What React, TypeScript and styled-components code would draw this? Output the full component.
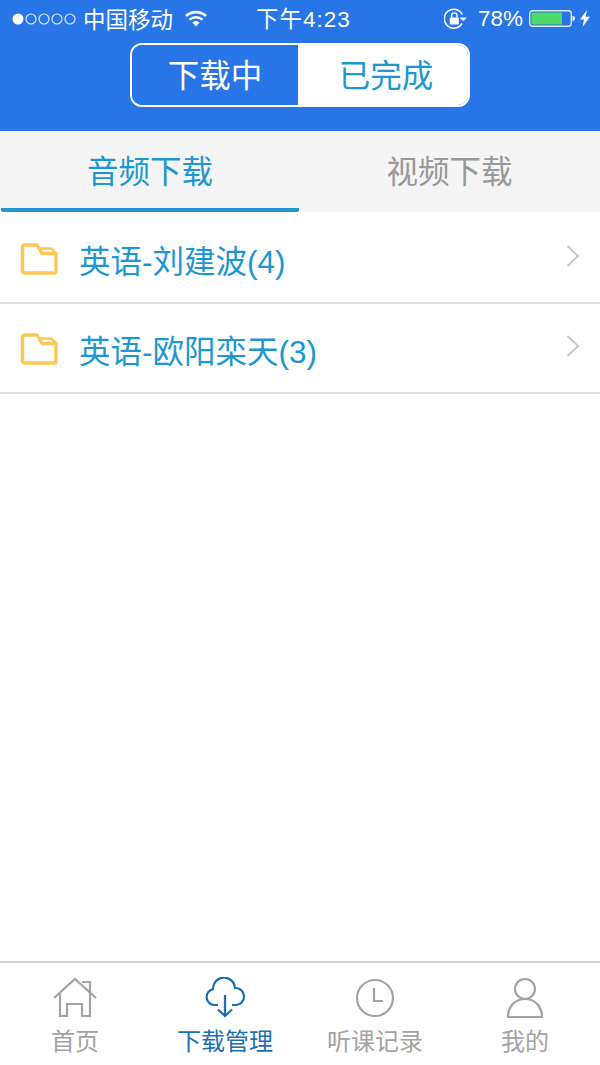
import React from "react";
import styled, { createGlobalStyle } from "styled-components";

const Global = createGlobalStyle`
  html, body { margin: 0; padding: 0; background: #fff; }
  body { font-family: "Liberation Sans", "Noto Sans CJK SC", sans-serif; }
  * { box-sizing: border-box; }
`;

const Page = styled.div`
  width: 600px;
  height: 1065px;
  display: flex;
  flex-direction: column;
  background: #fff;
  overflow: hidden;
`;

const Header = styled.header`
  height: 131px;
  background: #2775e6;
  display: flex;
  flex-direction: column;
  align-items: center;
`;

const StatusBar = styled.div`
  width: 100%;
  height: 43px;
  padding: 0 10px 6px 12px;
  display: grid;
  grid-template-columns: 1fr auto 1fr;
  align-items: center;
  color: #fff;
  font-size: 22.5px;
`;

const StatusLeft = styled.div`
  display: flex;
  align-items: center;
`;

const StatusRight = styled.div`
  display: flex;
  align-items: center;
  justify-content: flex-end;
`;

const Carrier = styled.span`
  margin-left: 7px;
  padding-bottom: 2px;
  width: 90px;
  white-space: nowrap;
`;

const Clock = styled.span`
  margin-left: 5px;
  padding-bottom: 3px;
  white-space: nowrap;
  letter-spacing: 1px;
`;

const Percent = styled.span`
  margin: 0 6px 0 11px;
`;

const Glyph = styled.svg<{ $gap?: number }>`
  display: block;
  flex: none;
  margin-left: ${(p) => p.$gap ?? 0}px;
`;

const Segmented = styled.div`
  width: 340px;
  height: 64px;
  display: flex;
  border: 2px solid #fff;
  border-radius: 12px;
  overflow: hidden;
`;

const Segment = styled.div<{ $active?: boolean }>`
  flex: ${(p) => (p.$active ? "0 0 166px" : "1")};
  display: flex;
  align-items: center;
  justify-content: center;
  font-size: 31.5px;
  padding: ${(p) => (p.$active ? "0 0 4px 0" : "0 0 4px 6px")};
  background: ${(p) => (p.$active ? "#2775e6" : "#fff")};
  color: ${(p) => (p.$active ? "#fff" : "#1c97d1")};
`;

const Tabs = styled.div`
  height: 81px;
  display: flex;
  background: #f5f5f5;
`;

const Tab = styled.div<{ $active?: boolean }>`
  flex: 0 0 ${(p) => (p.$active ? "298px" : "301px")};
  display: flex;
  align-items: center;
  justify-content: center;
  font-size: 31.5px;
  padding-bottom: 2px;
  margin-left: ${(p) => (p.$active ? "1px" : "0")};
  color: ${(p) => (p.$active ? "#1c97d1" : "#999")};
  border-bottom: 4px solid ${(p) => (p.$active ? "#1c97d1" : "transparent")};
  border-radius: 0 0 2px 2px;
`;

const List = styled.div`
  flex: 1;
  padding-top: 2px;
  background: #fff;
`;

const Row = styled.div`
  height: 90px;
  display: flex;
  align-items: center;
  padding: 2px 20px 0 20px;
  border-bottom: 2px solid #dfdfdf;
`;

const RowLabel = styled.span`
  flex: 1;
  margin-left: 21px;
  font-size: 31.5px;
  color: #1c97d1;
  white-space: nowrap;
`;

const TabBar = styled.nav`
  height: 104px;
  display: grid;
  grid-template-columns: repeat(4, 1fr);
  border-top: 2px solid #d2d2d2;
  background: #fff;
`;

const TabItem = styled.div<{ $active?: boolean }>`
  display: flex;
  flex-direction: column;
  align-items: center;
  padding-top: 14px;
  font-size: 24px;
  line-height: 32px;
  color: ${(p) => (p.$active ? "#1b6fb5" : "#a3a3a3")};
`;

const TabIcon = styled.svg`
  display: block;
  width: 48px;
  height: 44px;
  margin-bottom: 5px;
  fill: none;
  stroke: currentColor;
  stroke-width: 2.2;
`;

const Dots = () => (
  <Glyph width="64" height="14" viewBox="0 0 64 14">
    <circle cx="6" cy="7" r="5.5" fill="#fff" />
    {[19, 32, 45, 58].map((x) => (
      <circle key={x} cx={x} cy="7" r="5" fill="none" stroke="#d6e4fa" strokeWidth="1.2" />
    ))}
  </Glyph>
);

const Wifi = () => (
  <Glyph $gap={12} width="22" height="17" viewBox="0 0 22 17">
    <path d="M1 6C6.500 .8 15.500 .8 21 6" fill="none" stroke="#fff" strokeWidth="2.600" />
    <path d="M4.500 9.600c3.600-3.200 9.400-3.200 13 0" fill="none" stroke="#fff" strokeWidth="2.600" />
    <path d="M7.400 12.400c2.600-2 4.600-2 7.200 0L11 16.500z" fill="#fff" />
  </Glyph>
);

const RotationLock = () => (
  <Glyph width="23" height="22" viewBox="0 0 23 22">
    <path d="M18 15.500A9.500 9.500 0 1 1 18.300 6.500" fill="none" stroke="#fff" strokeWidth="1.500" />
    <path d="M15.500 9.500h7.500l-3.700 3.600z" fill="#fff" />
    <rect x="5.800" y="9.500" width="9" height="7" rx="1" fill="#fff" />
    <path d="M7.600 9.500V7.600a2.700 2.700 0 0 1 5.400 0v1.900" fill="none" stroke="#fff" strokeWidth="1.400" />
  </Glyph>
);

const Battery = () => (
  <Glyph width="46" height="17" viewBox="0 0 46 17">
    <rect x=".7" y=".7" width="41.600" height="15.600" rx="3" fill="none" stroke="#dfeafb" strokeWidth="1.400" />
    <rect x="2.500" y="2.500" width="30.500" height="12" rx="1" fill="#4cd964" />
    <path d="M43.500 6c1.600.3 2.500 1.200 2.500 2.500s-.9 2.200-2.500 2.500z" fill="#fff" />
  </Glyph>
);

const Bolt = () => (
  <Glyph $gap={5} width="10" height="17" viewBox="0 0 10 17">
    <path d="M7 0 0 9.500h4L2.600 17 10 6.800H5.700z" fill="#fff" />
  </Glyph>
);

const Folder = () => (
  <svg width="38" height="32" viewBox="0 0 38 32" fill="none" style={{ display: "block" }}>
    <path
      d="M2.500 4a2 2 0 0 1 2-2H17l5 8.500h14V28a2 2 0 0 1-2 2H4.500a2 2 0 0 1-2-2z"
      stroke="#fdc854"
      strokeWidth="3.400"
      strokeLinejoin="round"
    />
    <path d="M19.500 5.500H31.500L36 10.500" stroke="#fdc854" strokeWidth="2.500" />
  </svg>
);

const Chevron = () => (
  <svg width="14" height="24" viewBox="0 0 14 24" fill="none" style={{ display: "block", marginTop: -6 }}>
    <path d="M1.500 2 12 12 1.500 22" stroke="#c8c8c8" strokeWidth="2" />
  </svg>
);

const rows = ["英语-刘建波(4)", "英语-欧阳栾天(3)"];

export default function App() {
  return (
    <Page>
      <Global />
      <Header>
        <StatusBar>
          <StatusLeft>
            <Dots />
            <Carrier>中国移动</Carrier>
            <Wifi />
          </StatusLeft>
          <Clock>下午4:23</Clock>
          <StatusRight>
            <RotationLock />
            <Percent>78%</Percent>
            <Battery />
            <Bolt />
          </StatusRight>
        </StatusBar>
        <Segmented>
          <Segment $active>下载中</Segment>
          <Segment>已完成</Segment>
        </Segmented>
      </Header>
      <Tabs>
        <Tab $active>音频下载</Tab>
        <Tab>视频下载</Tab>
      </Tabs>
      <List>
        {rows.map((r) => (
          <Row key={r}>
            <Folder />
            <RowLabel>{r}</RowLabel>
            <Chevron />
          </Row>
        ))}
      </List>
      <TabBar>
        <TabItem>
          <TabIcon viewBox="0 0 48 44">
            <path d="M3 21 24 2 45 21" />
            <path d="M9 15v24h7V27h15v12h8V13" />
            <path d="M31 5h8v8" />
          </TabIcon>
          首页
        </TabItem>
        <TabItem $active>
          <TabIcon viewBox="0 0 48 44">
            <path d="M17 28h-4a8 8 0 0 1-1-15.800A11 11 0 0 1 34 11a8.500 8.500 0 0 1 1 17h-4" />
            <path d="M24 18v21M17 32.500l7 6.500 7-6.500" />
          </TabIcon>
          下载管理
        </TabItem>
        <TabItem>
          <TabIcon viewBox="0 0 48 44">
            <circle cx="24" cy="21" r="18" />
            <path d="M23 11v13h9" />
          </TabIcon>
          听课记录
        </TabItem>
        <TabItem>
          <TabIcon viewBox="0 0 48 44">
            <circle cx="24" cy="12" r="10" />
            <path d="M7 40c0-11 7.500-18 17-18s17 7 17 18z" />
          </TabIcon>
          我的
        </TabItem>
      </TabBar>
    </Page>
  );
}
